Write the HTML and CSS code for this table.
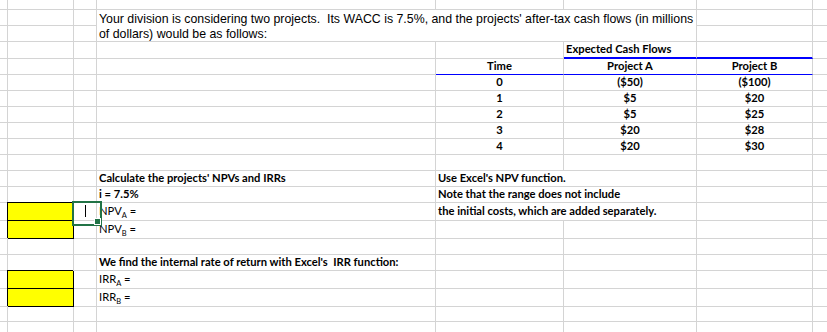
FILE: index.html
```html
<!DOCTYPE html>
<html>
<head>
<meta charset="utf-8">
<link rel="stylesheet" href="styles.css">
</head>
<body>
<div class="sheet">
  <!-- row 0 -->
  <div></div><div></div><div></div><div></div><div></div><div></div><div></div><div></div>
  <!-- rows 1-2 -->
  <div></div><div></div><div></div>
  <div class="intro">Your division is considering two projects.&nbsp; Its WACC is 7.5%, and the projects' after-tax cash flows (in millions<br>of dollars) would be as follows:</div>
  <div></div><div></div>
  <div></div><div></div><div></div><div></div><div></div>
  <!-- row 3 -->
  <div></div><div></div><div></div><div></div><div></div>
  <div class="b blue2">Expected Cash Flows</div><div class="blue2"></div><div></div>
  <!-- row 4 -->
  <div></div><div></div><div></div><div></div>
  <div class="b ctr blue1">Time</div><div class="b ctr blue1">Project A</div><div class="b ctr blue1">Project B</div><div></div>
  <!-- rows 5-9 -->
  <div></div><div></div><div></div><div></div><div class="b ctr">0</div><div class="b ctr">($50)</div><div class="b ctr">($100)</div><div></div>
  <div></div><div></div><div></div><div></div><div class="b ctr">1</div><div class="b ctr">$5</div><div class="b ctr">$20</div><div></div>
  <div></div><div></div><div></div><div></div><div class="b ctr">2</div><div class="b ctr">$5</div><div class="b ctr">$25</div><div></div>
  <div></div><div></div><div></div><div></div><div class="b ctr">3</div><div class="b ctr">$20</div><div class="b ctr">$28</div><div></div>
  <div></div><div></div><div></div><div></div><div class="b ctr">4</div><div class="b ctr">$20</div><div class="b ctr">$30</div><div></div>
  <!-- row 10 -->
  <div></div><div></div><div></div><div></div><div></div><div></div><div></div><div></div>
  <!-- row 11 -->
  <div></div><div></div><div></div><div class="b">Calculate the projects' NPVs and IRRs</div><div class="b span2">Use Excel's NPV function.</div><div></div><div></div>
  <!-- row 12 -->
  <div></div><div></div><div></div><div class="b">i = 7.5%</div><div class="b span2">Note that the range does not include</div><div></div><div></div>
  <!-- row 13 -->
  <div></div><div class="yellow"></div><div class="selected"><span class="caret"></span></div><div class="tall">NPV<span class="sub">A</span>&nbsp;=</div><div class="b span2 tall">the initial costs, which are added separately.</div><div></div><div></div>
  <!-- row 14 -->
  <div></div><div class="yellow"></div><div></div><div class="tall">NPV<span class="sub">B</span>&nbsp;=</div><div></div><div></div><div></div><div></div>
  <!-- row 15 -->
  <div></div><div></div><div></div><div></div><div></div><div></div><div></div><div></div>
  <!-- row 16 -->
  <div></div><div></div><div></div><div class="b pre">We find the internal rate of return with Excel's  IRR function:</div><div></div><div></div><div></div><div></div>
  <!-- row 17 -->
  <div></div><div class="yellow"></div><div></div><div class="tall">IRR<span class="sub">A</span>&nbsp;=</div><div></div><div></div><div></div><div></div>
  <!-- row 18 -->
  <div></div><div class="yellow"></div><div></div><div class="tall">IRR<span class="sub">B</span>&nbsp;=</div><div></div><div></div><div></div><div></div>
  <!-- row 19 -->
  <div></div><div></div><div></div><div></div><div></div><div></div><div></div><div></div>
  <!-- row 20 -->
  <div></div><div></div><div></div><div></div><div></div><div></div><div></div><div></div>
</div>
</body>
</html>
```
FILE: styles.css
```css
* {
  box-sizing: border-box;
  margin: 0;
  padding: 0;
}

html, body {
  margin: 0;
  background: #ffffff;
  overflow: hidden;
}

body {
  font-family: "Lato", sans-serif;
  font-size: 11.2px;
  color: #000000;
}

.sheet {
  display: grid;
  grid-template-columns: 8px 66px 23px 339px 128px 133px 116px 15px;
  grid-template-rows: 10px 16px 16px 17px repeat(9, 16px) 18px 18px 16px 16px 18px 18px 15px 16px;
  width: 828px;
  height: 332px;
  overflow: hidden;
}

.sheet > div {
  border-right: 1px solid #d4d4d4;
  border-bottom: 1px solid #d4d4d4;
  display: flex;
  align-items: flex-end;
  white-space: nowrap;
  line-height: 14px;
  padding: 0 2px 1px 2px;
}

.sheet > .intro {
  grid-column: span 3;
  grid-row: span 2;
  display: block;
  white-space: nowrap;
  font-family: "Liberation Sans", Arial, sans-serif;
  font-size: 12.35px;
  line-height: 15px;
  padding: 2px 2px 0 2px;
}

.b {
  font-weight: bold;
}

.sheet > .ctr {
  justify-content: center;
}

.sheet > .span2 {
  grid-column: span 2;
}

.sheet > .blue2 {
  border-bottom: 2px solid #0000ff;
}

.sheet > .blue1 {
  border-bottom: 1px solid #0000ff;
}

.sheet > .pre {
  white-space: pre;
}

.sheet > .tall {
  padding-bottom: 2px;
}

.sub {
  font-size: 7.5px;
  line-height: 8px;
  position: relative;
  top: 2px;
}

.sheet > .yellow {
  background: #ffff00;
  border-right-color: #000000;
  border-bottom-color: #000000;
  box-shadow: -1px -1px 0 #000000;
}

.sheet > .selected {
  position: relative;
}

.selected::before {
  content: "";
  position: absolute;
  left: -2px;
  top: -2px;
  width: 26px;
  height: 21px;
  border: 2px solid #217346;
}

.selected::after {
  content: "";
  position: absolute;
  left: 20px;
  top: 15px;
  width: 5px;
  height: 5px;
  background: #217346;
  border: 1px solid #ffffff;
}

.caret {
  position: absolute;
  left: 11px;
  top: 2px;
  width: 1px;
  height: 12px;
  background: #000000;
}
```
